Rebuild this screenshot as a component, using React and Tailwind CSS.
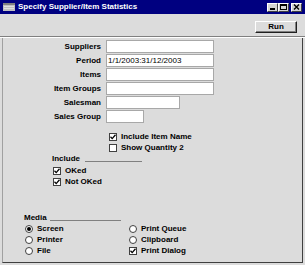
import React from "react";

const font = { fontFamily: '"Liberation Sans", Arial, sans-serif' };

function Field({ label, width, value }) {
  return (
    <div className="flex h-[14px] items-start">
      <div className="w-[98px] h-[13px] flex items-center justify-end text-[8px] font-bold leading-none text-black">
        {label}
      </div>
      <div
        className={`ml-[5px] h-[13px] bg-white border border-[#a8a8a8] flex items-center pl-[1px] text-[8px] leading-none font-normal text-black ${width}`}
      >
        {value}
      </div>
    </div>
  );
}

function Check({ label, checked = true }) {
  return (
    <div className="flex items-center h-[11px]">
      <div className="w-[8px] h-[8px] bg-white border border-[#404040] flex items-center justify-center">
        {checked && (
          <svg width="6" height="6" viewBox="0 0 6 6">
            <path d="M0.5 2.8 L2.2 4.6 L5.5 0.8" stroke="#000" strokeWidth="1.3" fill="none" />
          </svg>
        )}
      </div>
      <span className="ml-[4px] text-[8px] font-bold leading-none">{label}</span>
    </div>
  );
}

function Radio({ label, checked = false }) {
  return (
    <div className="flex items-center h-[11px]">
      <div className="w-[8px] h-[8px] rounded-full bg-white border border-[#404040] flex items-center justify-center">
        {checked && <div className="w-[4px] h-[4px] rounded-full bg-black" />}
      </div>
      <span className="ml-[4px] text-[8px] font-bold leading-none">{label}</span>
    </div>
  );
}

function WinBtn({ children, className = "" }) {
  return (
    <div
      className={`w-[11px] h-[9px] bg-[#d4d4d4] border-t border-l border-white border-r border-b border-r-[#404040] border-b-[#404040] flex items-center justify-center ${className}`}
    >
      {children}
    </div>
  );
}

export default function App() {
  return (
    <div className="w-[305px] h-[265px] bg-[#dcdcdc] flex flex-col text-black" style={font}>
      {/* Title bar */}
      <div className="h-[14px] bg-[#000080] flex items-center pl-[3px] pr-[3px]">
        <svg width="12" height="8" viewBox="0 0 12 8" className="shrink-0">
          <rect x="0" y="0" width="12" height="8" fill="#c0c0c0" />
          <rect x="0" y="0" width="12" height="2" fill="#808080" />
          <rect x="1" y="3" width="10" height="1" fill="#e0e0e0" />
          <rect x="1" y="5" width="10" height="1" fill="#e0e0e0" />
        </svg>
        <span className="ml-[3px] text-[8px] font-bold leading-none text-white">
          Specify Supplier/Item Statistics
        </span>
        <div className="ml-auto flex items-center">
          <WinBtn>
            <div className="w-[5px] h-[2px] bg-black mt-[4px]" />
          </WinBtn>
          <WinBtn>
            <div className="w-[7px] h-[6px] border border-black border-t-2" />
          </WinBtn>
          <WinBtn className="ml-[2px]">
            <svg width="7" height="6" viewBox="0 0 7 6">
              <path d="M1 0.5 L6 5.5 M6 0.5 L1 5.5" stroke="#000" strokeWidth="1.4" />
            </svg>
          </WinBtn>
        </div>
      </div>

      {/* Toolbar */}
      <div className="h-[22px] flex justify-end items-start pt-[7px] pr-[8px]">
        <div className="w-[42px] h-[12px] bg-[#dcdcdc] border-t border-l border-white border-r border-b border-r-[#202020] border-b-[#202020] shadow-[inset_-1px_-1px_0_#808080] flex items-center justify-center text-[8px] font-bold leading-none">
          Run
        </div>
      </div>
      <div className="h-[2px] border-t border-[#808080] border-b border-b-white" />

      {/* Main panel */}
      <div className="flex-1 mx-[2px] mb-[2px] border-l border-[#a0a0a0] border-r border-r-[#404040] border-b border-b-[#404040] flex flex-col pt-[2px]">
        <Field label="Suppliers" width="w-[108px]" />
        <Field label="Period" width="w-[108px]" value="1/1/2003:31/12/2003" />
        <Field label="Items" width="w-[108px]" />
        <Field label="Item Groups" width="w-[108px]" />
        <Field label="Salesman" width="w-[74px]" />
        <Field label="Sales Group" width="w-[38px]" />

        <div className="ml-[106px] mt-[7px] flex flex-col">
          <Check label="Include Item Name" />
          <Check label="Show Quantity 2" checked={false} />
        </div>

        <div className="ml-[49px] flex items-center h-[12px]">
          <span className="text-[8px] font-bold leading-none">Include</span>
          <div className="ml-[5px] mt-[4px] w-[57px] h-[1px] bg-[#808080]" />
        </div>
        <div className="ml-[50px] flex flex-col">
          <Check label="OKed" />
          <Check label="Not OKed" />
        </div>

        <div className="ml-[21px] mt-[26px] flex items-center h-[10px]">
          <span className="text-[8px] font-bold leading-none">Media</span>
          <div className="ml-[3px] mt-[4px] w-[71px] h-[1px] bg-[#808080]" />
        </div>
        <div className="ml-[22px] flex">
          <div className="w-[104px] flex flex-col">
            <Radio label="Screen" checked />
            <Radio label="Printer" />
            <Radio label="File" />
          </div>
          <div className="flex flex-col">
            <Radio label="Print Queue" />
            <Radio label="Clipboard" />
            <Check label="Print Dialog" />
          </div>
        </div>
      </div>
    </div>
  );
}
